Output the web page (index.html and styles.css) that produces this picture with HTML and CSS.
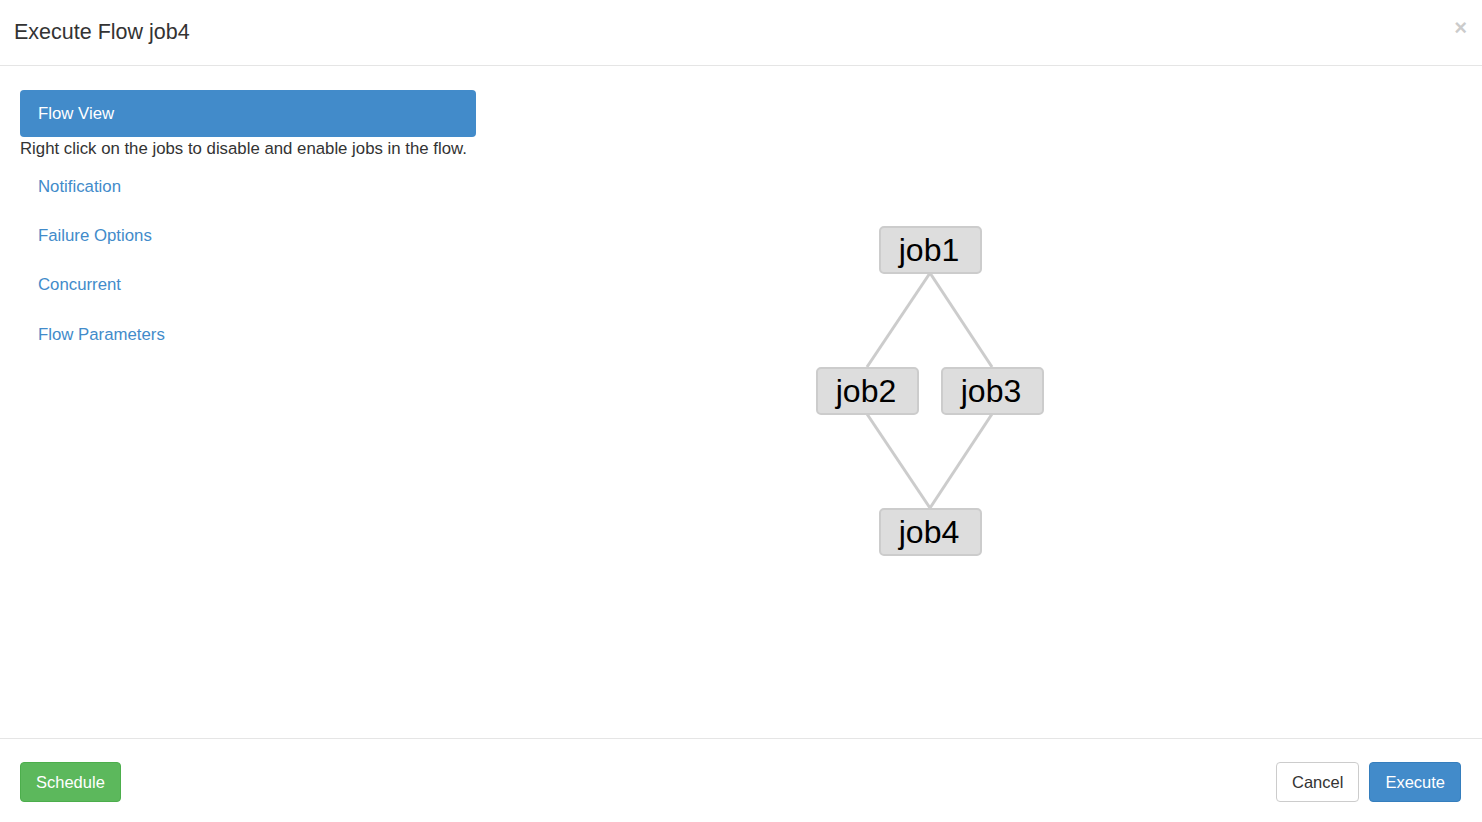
FILE: index.html
```html
<!DOCTYPE html>
<html>
<head>
<meta charset="utf-8">
<link rel="stylesheet" href="styles.css">
</head>
<body>
<div class="modal">
  <div class="modal-header">
    <h4 class="modal-title">Execute Flow job4</h4>
    <button class="close" type="button">&times;</button>
  </div>
  <div class="modal-body">
    <div class="sidebar">
      <div class="pill active">Flow View</div>
      <p class="hint">Right click on the jobs to disable and enable jobs in the flow.</p>
      <ul class="nav">
        <li><a href="#">Notification</a></li>
        <li><a href="#">Failure Options</a></li>
        <li><a href="#">Concurrent</a></li>
        <li><a href="#">Flow Parameters</a></li>
      </ul>
    </div>
    <div class="graph">
      <svg class="edges" width="1006" height="672" viewBox="0 0 1006 672">
        <g stroke="#cccccc" stroke-width="3" fill="none">
          <line x1="454" y1="207" x2="391" y2="301"/>
          <line x1="454" y1="207" x2="516" y2="301"/>
          <line x1="391" y1="348" x2="454" y2="442"/>
          <line x1="516" y1="348" x2="454" y2="442"/>
        </g>
      </svg>
      <div class="node n1">job1</div>
      <div class="node n2">job2</div>
      <div class="node n3">job3</div>
      <div class="node n4">job4</div>
    </div>
  </div>
  <div class="modal-footer">
    <button class="btn btn-success" type="button">Schedule</button>
    <div class="right">
      <button class="btn btn-default" type="button">Cancel</button>
      <button class="btn btn-primary" type="button">Execute</button>
    </div>
  </div>
</div>
</body>
</html>
```
FILE: styles.css
```css
* { box-sizing: border-box; }
html, body { margin: 0; padding: 0; background: #fff; }
body {
  font-family: "Liberation Sans", Arial, sans-serif;
  color: #333;
  font-size: 16.8px;
  line-height: 22px;
}
.modal {
  width: 1482px;
  height: 822px;
  display: flex;
  flex-direction: column;
}
.modal-header {
  height: 66px;
  border-bottom: 1px solid #e5e5e5;
  padding: 0 15px 0 14px;
  display: flex;
  align-items: flex-start;
  justify-content: space-between;
}
.modal-title {
  margin: 0;
  padding-top: 19px;
  font-size: 21.5px;
  font-weight: normal;
  line-height: 26px;
  color: #333;
}
.close {
  margin-top: 15px;
  padding: 0;
  border: 0;
  background: transparent;
  font-family: "Liberation Sans", Arial, sans-serif;
  font-size: 22px;
  font-weight: bold;
  line-height: 26px;
  color: #000;
  opacity: 0.2;
  cursor: pointer;
}
.modal-body {
  flex: 1;
  display: flex;
  padding: 24px 0 0 20px;
}
.sidebar {
  width: 456px;
  flex: none;
}
.pill {
  height: 47px;
  padding: 12.5px 18px;
  border-radius: 4px;
  background: #428bca;
  color: #fff;
}
.hint {
  margin: 0;
  padding-top: 1px;
  line-height: 22px;
}
.nav {
  list-style: none;
  margin: 2px 0 0;
  padding: 0;
}
.nav li a {
  display: block;
  padding: 13.67px 18px;
  line-height: 22px;
  color: #428bca;
  text-decoration: none;
}
.graph {
  position: relative;
  flex: 1;
  margin-top: -24px;
}
.edges {
  position: absolute;
  left: 0;
  top: 0;
}
.node {
  position: absolute;
  width: 103px;
  height: 48px;
  padding-right: 3px;
  background: #dddddd;
  border: 2px solid #cccccc;
  border-radius: 5px;
  color: #000;
  font-size: 32px;
  line-height: 44px;
  text-align: center;
}
.n1 { left: 403px; top: 160px; }
.n2 { left: 340px; top: 301px; }
.n3 { left: 465px; top: 301px; }
.n4 { left: 403px; top: 442px; }
.modal-footer {
  height: 84px;
  border-top: 1px solid #e5e5e5;
  padding: 23px 21px 0 20px;
  display: flex;
  justify-content: space-between;
  align-items: flex-start;
}
.right {
  display: flex;
  gap: 10px;
}
.btn {
  height: 40px;
  padding: 8px 15px;
  border: 1px solid transparent;
  border-radius: 4px;
  font-family: "Liberation Sans", Arial, sans-serif;
  font-size: 16.5px;
  line-height: 23px;
  cursor: pointer;
}
.btn-success { background: #5cb85c; border-color: #4cae4c; color: #fff; }
.btn-default { background: #fff; border-color: #ccc; color: #333; }
.btn-primary { background: #428bca; border-color: #357ebd; color: #fff; }
```
